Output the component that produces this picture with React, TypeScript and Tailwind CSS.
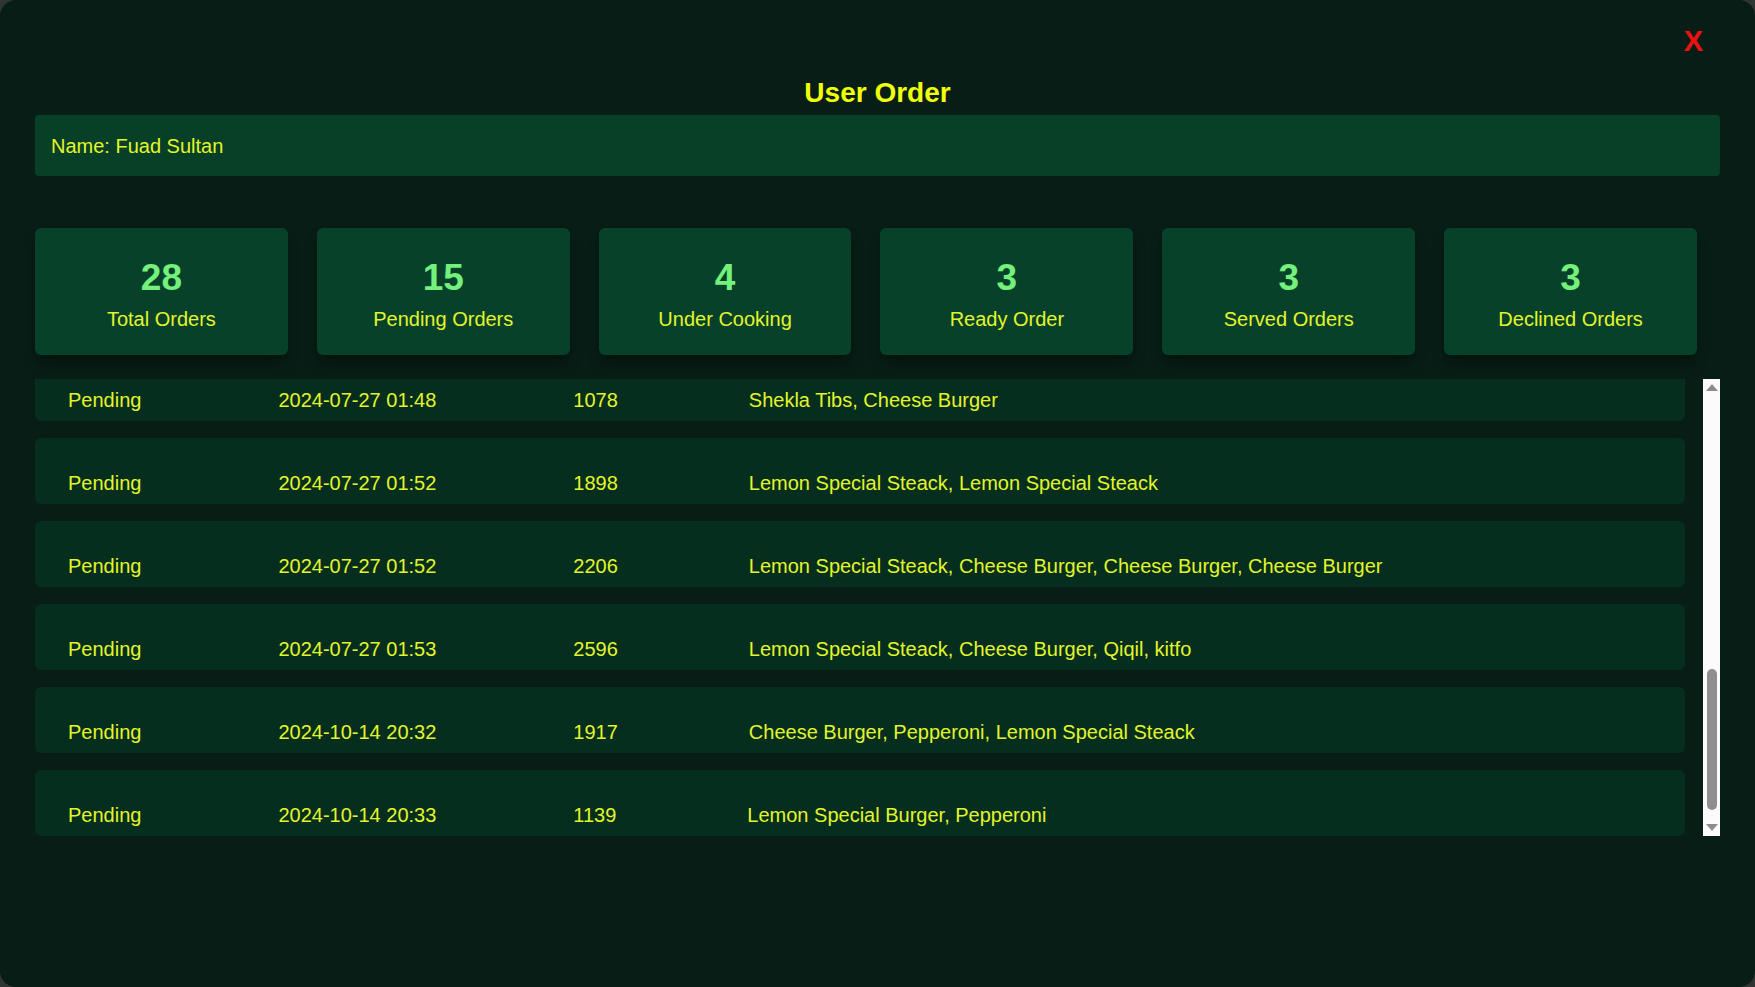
interface Order {
	status: string;
	date: string;
	id: number;
	items: string;
}

const stats = [
	{ value: 28, label: 'Total Orders' },
	{ value: 15, label: 'Pending Orders' },
	{ value: 4, label: 'Under Cooking' },
	{ value: 3, label: 'Ready Order' },
	{ value: 3, label: 'Served Orders' },
	{ value: 3, label: 'Declined Orders' },
];

// the list is scrolled to its end, so only the last six pending orders show
const orders: Order[] = [
	{ status: 'Pending', date: '2024-07-27 01:48', id: 1078, items: 'Shekla Tibs, Cheese Burger' },
	{ status: 'Pending', date: '2024-07-27 01:52', id: 1898, items: 'Lemon Special Steack, Lemon Special Steack' },
	{
		status: 'Pending',
		date: '2024-07-27 01:52',
		id: 2206,
		items: 'Lemon Special Steack, Cheese Burger, Cheese Burger, Cheese Burger',
	},
	{ status: 'Pending', date: '2024-07-27 01:53', id: 2596, items: 'Lemon Special Steack, Cheese Burger, Qiqil, kitfo' },
	{ status: 'Pending', date: '2024-10-14 20:32', id: 1917, items: 'Cheese Burger, Pepperoni, Lemon Special Steack' },
	{ status: 'Pending', date: '2024-10-14 20:33', id: 1139, items: 'Lemon Special Burger, Pepperoni' },
];

const StatCard = ({ value, label }: { value: number; label: string }) => {
	return (
		<div className="flex h-[127px] flex-col items-center rounded-md bg-[#08412a] pt-[30px] shadow-lg shadow-black/30">
			<span className="text-[37px] leading-[40px] font-bold text-[#74f07c]">{value}</span>
			<span className="mt-[7px] text-xl leading-7 text-[#e2f52c]">{label}</span>
		</div>
	);
};

const OrderRow = ({ order }: { order: Order }) => {
	return (
		<div className="flex h-[66px] shrink-0 items-end rounded-md bg-[#052e1e] pb-[6px] pl-[33px] text-xl leading-[30px] text-[#e2f52c]">
			<span className="mr-[137px]">{order.status}</span>
			<span className="mr-[137px]">{order.date}</span>
			<span className="mr-[131px]">{order.id}</span>
			<span>{order.items}</span>
		</div>
	);
};

const ScrollBar = () => {
	return (
		<div className="flex w-[17px] shrink-0 flex-col items-center bg-[#fcfbfc]">
			<div className="flex h-[17px] w-full items-center justify-center">
				<svg width="12" height="7" viewBox="0 0 12 7">
					<path d="M6 0 L12 7 L0 7 Z" fill="#8c8c8c" />
				</svg>
			</div>
			<div className="mt-auto mb-[9px] h-[141px] w-[10px] rounded-full bg-[#8f8f8f]" />
			<div className="flex h-[17px] w-full items-center justify-center">
				<svg width="12" height="7" viewBox="0 0 12 7">
					<path d="M0 0 L12 0 L6 7 Z" fill="#8c8c8c" />
				</svg>
			</div>
		</div>
	);
};

export default function App() {
	return (
		<div className="h-screen w-full bg-[#2f3532]" style={{ fontFamily: '"Liberation Sans", Arial, sans-serif' }}>
			<div className="relative flex h-full flex-col overflow-hidden rounded-2xl bg-[#071d15] px-[35px]">
				<button className="absolute top-[25px] right-[52px] text-[29px] leading-8 font-bold text-[#ee1111]">
					X
				</button>

				<h1 className="mt-[73px] text-center text-[28px] leading-[40px] font-bold text-[#f0ff0a]">
					User Order
				</h1>

				<div className="mt-[2px] flex h-[61px] items-center rounded-sm bg-[#084027] px-[16px] text-xl leading-7 text-[#e2f52c]">
					Name: Fuad Sultan
				</div>

				<div className="mt-[52px] mr-[23px] grid grid-cols-6 gap-[29px]">
					{stats.map((s) => (
						<StatCard key={s.label} value={s.value} label={s.label} />
					))}
				</div>

				<div className="mt-[24px] flex h-[457px] gap-[18px]">
					<div className="flex flex-1 flex-col justify-end gap-[17px] overflow-hidden">
						{orders.map((o) => (
							<OrderRow key={o.id} order={o} />
						))}
					</div>
					<ScrollBar />
				</div>
			</div>
		</div>
	);
}
